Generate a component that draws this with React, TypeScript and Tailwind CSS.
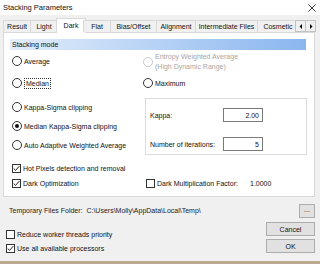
import React from "react";

const tabs = [
  { label: "Result", w: "w-[28px]" },
  { label: "Light", w: "w-[28px]" },
  { label: "Dark", w: "w-[30px]", active: true },
  { label: "Flat", w: "w-[28px]" },
  { label: "Bias/Offset", w: "w-[47px]" },
  { label: "Alignment", w: "w-[40px]" },
  { label: "Intermediate Files", w: "w-[63px]" },
  { label: "Cosmetic", w: "w-[42px]" },
];

function Radio({ checked, disabled }: { checked?: boolean; disabled?: boolean }) {
  return (
    <span
      className={`flex h-[10px] w-[10px] shrink-0 items-center justify-center rounded-full border bg-white ${
        disabled ? "border-[#c8c8c8]" : "border-[#333333]"
      }`}
    >
      {checked && <span className="h-[4px] w-[4px] rounded-full bg-[#111111]" />}
    </span>
  );
}

function Check({ checked }: { checked?: boolean }) {
  return (
    <span className="flex h-[9px] w-[9px] shrink-0 items-center justify-center border border-[#333333] bg-white">
      {checked && (
        <svg width="7" height="7" viewBox="0 0 7 7">
          <path d="M0.7 3.5 L2.6 5.4 L6.3 1.1" fill="none" stroke="#222" strokeWidth="1" />
        </svg>
      )}
    </span>
  );
}

function RadioRow({ label, checked, className = "" }: { label: React.ReactNode; checked?: boolean; className?: string }) {
  return (
    <div className={`flex h-[12px] items-center gap-[2px] ${className}`}>
      <Radio checked={checked} />
      <span>{label}</span>
    </div>
  );
}

function Button({ children, className = "" }: { children: React.ReactNode; className?: string }) {
  return (
    <div
      className={`flex h-[14px] items-center justify-center border border-[#adadad] bg-[#e1e1e1] ${className}`}
    >
      {children}
    </div>
  );
}

export default function App() {
  return (
    <div className="flex h-[264px] w-[320px] flex-col overflow-hidden bg-[#f0f0f0] font-['Liberation_Sans',Arial,sans-serif] text-[7px] leading-none text-[#111]">
      {/* title bar */}
      <div className="flex h-[15px] items-center justify-between bg-white pl-[3px] pr-[4px]">
        <span className="text-[7.5px]">Stacking Parameters</span>
        <svg width="8" height="8" viewBox="0 0 8 8">
          <path d="M0.5 0.5 L7.5 7.5 M7.5 0.5 L0.5 7.5" stroke="#222" strokeWidth="0.9" />
        </svg>
      </div>

      {/* tab strip */}
      <div className="relative z-10 mb-[-1px] mt-[3px] flex h-[15px] items-end pl-[3px]">
        <div className="flex w-[292px] items-end overflow-hidden">
          {tabs.map((t) =>
            t.active ? (
              <div
                key={t.label}
                className={`-mx-[2px] flex h-[15px] ${t.w} shrink-0 items-start justify-center border-x border-t border-[#d9d9d9] bg-white pt-[3px]`}
              >
                {t.label}
              </div>
            ) : (
              <div
                key={t.label}
                className={`-ml-[1px] mb-[1px] flex h-[12px] ${t.w} shrink-0 items-center justify-center border-x border-t border-[#d9d9d9] bg-[#f0f0f0] first:ml-0`}
              >
                {t.label}
              </div>
            )
          )}
        </div>
        <div className="mb-[1px] flex">
          <div className="flex h-[12px] w-[11px] items-center justify-center border border-[#c2c2c2] bg-[#f0f0f0]">
            <svg width="4" height="5" viewBox="0 0 4 5">
              <path d="M3 0 L0.5 2.5 L3 5 Z" fill="#000" />
            </svg>
          </div>
          <div className="-ml-[1px] flex h-[12px] w-[11px] items-center justify-center border border-[#c2c2c2] bg-[#f0f0f0]">
            <svg width="4" height="5" viewBox="0 0 4 5">
              <path d="M1 0 L3.5 2.5 L1 5 Z" fill="#000" />
            </svg>
          </div>
        </div>
      </div>

      {/* panel */}
      <div className="ml-[3px] flex h-[165px] w-[312px] flex-col border border-[#d9d9d9] bg-white">
        <div className="ml-[6px] mt-[6px] flex h-[11px] w-[296px] items-center bg-gradient-to-r from-[#e2edfa] to-[#8ab6ef] pl-[2px]">
          Stacking mode
        </div>

        <div className="grid grid-cols-[131px_1fr] pl-[8px]">
          <div className="flex flex-col">
            <RadioRow label="Average" className="mt-[5px]" />
            <RadioRow
              label={<span className="border border-dotted border-[#333] px-[1px] py-[1px]">Median</span>}
              className="mt-[10px]"
            />
            <RadioRow label="Kappa-Sigma clipping" className="mt-[12px]" />
            <RadioRow label="Median Kappa-Sigma clipping" checked className="mt-[7px]" />
            <RadioRow label="Auto Adaptive Weighted Average" className="mt-[7px]" />
          </div>

          <div className="flex flex-col">
            <div className="mt-[2px] flex h-[20px] items-center gap-[2px] text-[#a6a6a6]">
              <Radio disabled />
              <div className="flex flex-col leading-[10px]">
                <span>Entropy Weighted Average</span>
                <span>(High Dynamic Range)</span>
              </div>
            </div>
            <RadioRow label="Maximum" className="mt-[5px]" />
            <div className="ml-[2px] mt-[9px] flex h-[57px] w-[162px] flex-col border border-[#dcdcdc] bg-white pl-[4px] pt-[9px]">
              <div className="flex h-[14px] items-center">
                <span className="w-[73px]">Kappa:</span>
                <div className="flex h-[14px] w-[40px] items-center justify-end border border-[#7a7a7a] bg-white pr-[3px]">
                  2.00
                </div>
              </div>
              <div className="mt-[15px] flex h-[14px] items-center">
                <span className="w-[73px]">Number of iterations:</span>
                <div className="flex h-[14px] w-[40px] items-center justify-end border border-[#7a7a7a] bg-white pr-[3px]">
                  5
                </div>
              </div>
            </div>
          </div>
        </div>

        <div className="mt-[7px] flex h-[12px] items-center gap-[2px] pl-[8px]">
          <Check checked />
          <span>Hot Pixels detection and removal</span>
        </div>
        <div className="mt-[3px] flex h-[12px] items-center pl-[8px]">
          <div className="flex w-[134px] items-center gap-[2px]">
            <Check checked />
            <span>Dark Optimization</span>
          </div>
          <Check />
          <span className="ml-[2px] w-[93px]">Dark Multiplication Factor:</span>
          <span>1.0000</span>
        </div>
      </div>

      {/* folder row */}
      <div className="mt-[7px] flex h-[13px] items-center justify-between pl-[9px] pr-[5px]">
        <span className="text-[#222]">Temporary Files Folder:&nbsp; C:\Users\Molly\AppData\Local\Temp\</span>
        <Button className="h-[13px] w-[16px] pb-[3px]">...</Button>
      </div>

      <div className="mt-[5px] flex justify-between pl-[6px] pr-[5px]">
        <div className="flex flex-col">
          <div className="mt-[6px] flex h-[12px] items-center gap-[2px]">
            <Check />
            <span>Reduce worker threads priority</span>
          </div>
          <div className="mt-[2px] flex h-[12px] items-center gap-[2px]">
            <Check checked />
            <span>Use all available processors</span>
          </div>
        </div>
        <div className="flex flex-col">
          <Button className="w-[49px]">Cancel</Button>
          <Button className="mt-[3px] w-[49px]">OK</Button>
        </div>
      </div>

      <div className="mt-auto h-[3px] bg-[#bba98e]" />
    </div>
  );
}
